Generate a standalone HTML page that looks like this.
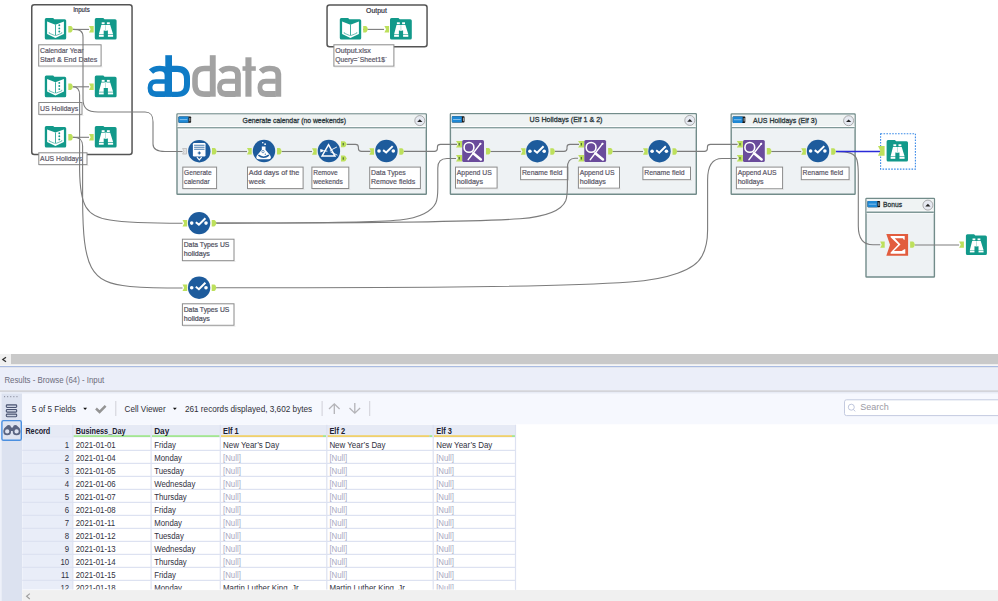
<!DOCTYPE html>
<html><head><meta charset="utf-8"><style>
html,body{margin:0;padding:0;background:#fff;overflow:hidden}
svg{display:block}
text{font-family:"Liberation Sans",sans-serif;white-space:pre}
</style></head><body>
<svg width="998" height="601" viewBox="0 0 998 601">
<rect x="0" y="0" width="998" height="354" fill="#ffffff"/>
<path d="M148.9,69.6 Q152.6,65.8 159.6,65.8 Q171.29999999999998,65.8 171.29999999999998,73.8 V96.7 H164.6 V75.5 Q164.6,71.3 160.1,71.3 H159.1 Q155.1,71.3 153.1,73.8 Z" fill="#0f7bc6"/>
<path fill-rule="evenodd" d="M165.1,79.3 H156.1 Q147.6,79.3 147.6,88.1 Q147.6,96.9 156.1,96.9 H165.1 Z M165.1,83.7 H156.1 Q152.4,83.7 152.4,87.5 Q152.4,91.3 156.1,91.3 H165.1 Z" fill="#0f7bc6"/>
<rect x="165.3" y="55.2" width="6.7" height="41.5" fill="#0f7bc6"/>
<path fill-rule="evenodd" d="M171.5,65.7 H177 Q190,65.7 190,78.5 V84.2 Q190,96.9 177,96.9 H171.5 Z M171.9,72 H177.5 Q184,72 184,79 V84.7 Q184,91.7 177.5,91.7 H171.9 Z" fill="#0f7bc6"/>
<rect x="209.8" y="55.2" width="5.9" height="41.5" fill="#a2a2a2"/>
<path fill-rule="evenodd" d="M210.2,65.8 H205 Q192.2,65.8 192.2,78.5 V84.2 Q192.2,96.9 205,96.9 H210.2 Z M210.2,71.2 H204 Q197.8,71.2 197.8,78 V84.5 Q197.8,91.2 204,91.2 H210.2 Z" fill="#a2a2a2"/>
<path d="M218.4,69.6 Q222.1,65.8 229.1,65.8 Q240.79999999999998,65.8 240.79999999999998,73.8 V96.7 H234.99999999999997 V75.5 Q234.99999999999997,71.3 230.49999999999997,71.3 H228.6 Q224.6,71.3 222.6,73.8 Z" fill="#a2a2a2"/>
<path fill-rule="evenodd" d="M235.49999999999997,78.8 H225.6 Q217.1,78.8 217.1,87.85 Q217.1,96.9 225.6,96.9 H235.49999999999997 Z M235.49999999999997,83.7 H225.6 Q221.9,83.7 221.9,87.30000000000001 Q221.9,90.9 225.6,90.9 H235.49999999999997 Z" fill="#a2a2a2"/>
<path d="M258.8,69.6 Q262.5,65.8 269.5,65.8 Q281.2,65.8 281.2,73.8 V96.7 H275.4 V75.5 Q275.4,71.3 270.9,71.3 H269.0 Q265.0,71.3 263.0,73.8 Z" fill="#a2a2a2"/>
<path fill-rule="evenodd" d="M275.9,78.8 H266.0 Q257.5,78.8 257.5,87.85 Q257.5,96.9 266.0,96.9 H275.9 Z M275.9,83.7 H266.0 Q262.3,83.7 262.3,87.30000000000001 Q262.3,90.9 266.0,90.9 H275.9 Z" fill="#a2a2a2"/>
<rect x="245.4" y="57.3" width="6.1" height="39.4" fill="#a2a2a2"/>
<rect x="242.5" y="66.25" width="13.3" height="4.55" fill="#a2a2a2"/>
<rect x="31.75" y="4.75" width="100.30000000000001" height="149.7" rx="2.5" fill="#fff" stroke="#555" stroke-width="1.5"/>
<text x="73.20" y="12.30" font-size="7.2" font-weight="normal" fill="#303040" text-anchor="start" textLength="16.50" lengthAdjust="spacingAndGlyphs" stroke="#303040" stroke-width="0.2">Inputs</text>
<rect x="327.05" y="4.95" width="100.0" height="41.699999999999996" rx="2.5" fill="#fff" stroke="#555" stroke-width="1.5"/>
<text x="366.10" y="12.50" font-size="7.2" font-weight="normal" fill="#303040" text-anchor="start" textLength="20.80" lengthAdjust="spacingAndGlyphs" stroke="#303040" stroke-width="0.2">Output</text>
<rect x="177.0" y="113.9" width="249.29999999999998" height="80.39999999999999" rx="0.6" fill="#eef2f4" stroke="#728c8a" stroke-width="1.4"/>
<rect x="177.70000000000002" y="114.60000000000001" width="247.89999999999998" height="12.399999999999997" fill="#eff3f3"/>
<rect x="177.70000000000002" y="126.1" width="247.89999999999998" height="1" fill="#ffffff"/>
<rect x="177.70000000000002" y="127.1" width="247.89999999999998" height="1.5" fill="#7f9897"/>
<rect x="177.70000000000002" y="128.6" width="247.89999999999998" height="0.8" fill="#fafcfc"/>
<rect x="178.5" y="116.5" width="12.6" height="6.3" rx="0.8" fill="#111"/>
<rect x="178.5" y="116.5" width="10" height="6.3" rx="0.8" fill="#1e88d4"/>
<rect x="179.70000000000002" y="119.2" width="7.6" height="0.9" fill="#8fc6ee"/>
<rect x="189.5" y="117.8" width="0.8" height="3.6" fill="#ddd"/>
<circle cx="419.8" cy="120.60000000000001" r="5.0" fill="#e6e9f1" stroke="#9a9a9a" stroke-width="0.8"/>
<path d="M417.2,121.9 L419.8,119.30000000000001 L422.40000000000003,121.9 Z" fill="#222"/>
<text x="242.60" y="122.60" font-size="7.9" font-weight="normal" fill="#2e3a40" text-anchor="start" textLength="103.40" lengthAdjust="spacingAndGlyphs" stroke="#2e3a40" stroke-width="0.32">Generate calendar (no weekends)</text>
<rect x="450.4" y="113.7" width="245.9" height="80.6" rx="0.6" fill="#eef2f4" stroke="#728c8a" stroke-width="1.4"/>
<rect x="451.09999999999997" y="114.4" width="244.5" height="12.6" fill="#eff3f3"/>
<rect x="451.09999999999997" y="126.1" width="244.5" height="1" fill="#ffffff"/>
<rect x="451.09999999999997" y="127.1" width="244.5" height="1.5" fill="#7f9897"/>
<rect x="451.09999999999997" y="128.6" width="244.5" height="0.8" fill="#fafcfc"/>
<rect x="451.9" y="116.3" width="12.6" height="6.3" rx="0.8" fill="#111"/>
<rect x="451.9" y="116.3" width="10" height="6.3" rx="0.8" fill="#1e88d4"/>
<rect x="453.09999999999997" y="119.0" width="7.6" height="0.9" fill="#8fc6ee"/>
<rect x="462.9" y="117.6" width="0.8" height="3.6" fill="#ddd"/>
<circle cx="689.8" cy="120.4" r="5.0" fill="#e6e9f1" stroke="#9a9a9a" stroke-width="0.8"/>
<path d="M687.1999999999999,121.7 L689.8,119.10000000000001 L692.4,121.7 Z" fill="#222"/>
<text x="529.50" y="122.40" font-size="7.9" font-weight="normal" fill="#2e3a40" text-anchor="start" textLength="73.00" lengthAdjust="spacingAndGlyphs" stroke="#2e3a40" stroke-width="0.32">US Holidays (Elf 1 &amp; 2)</text>
<rect x="731.2" y="114.0" width="123.89999999999995" height="80.3" rx="0.6" fill="#eef2f4" stroke="#728c8a" stroke-width="1.4"/>
<rect x="731.9" y="114.7" width="122.49999999999996" height="12.200000000000008" fill="#eff3f3"/>
<rect x="731.9" y="126.0" width="122.49999999999996" height="1" fill="#ffffff"/>
<rect x="731.9" y="127.0" width="122.49999999999996" height="1.5" fill="#7f9897"/>
<rect x="731.9" y="128.5" width="122.49999999999996" height="0.8" fill="#fafcfc"/>
<rect x="732.7" y="116.6" width="12.6" height="6.3" rx="0.8" fill="#111"/>
<rect x="732.7" y="116.6" width="10" height="6.3" rx="0.8" fill="#1e88d4"/>
<rect x="733.9" y="119.3" width="7.6" height="0.9" fill="#8fc6ee"/>
<rect x="743.7" y="117.89999999999999" width="0.8" height="3.6" fill="#ddd"/>
<circle cx="848.5999999999999" cy="120.7" r="5.0" fill="#e6e9f1" stroke="#9a9a9a" stroke-width="0.8"/>
<path d="M845.9999999999999,122.0 L848.5999999999999,119.4 L851.1999999999999,122.0 Z" fill="#222"/>
<text x="753.00" y="122.70" font-size="7.9" font-weight="normal" fill="#2e3a40" text-anchor="start" textLength="64.00" lengthAdjust="spacingAndGlyphs" stroke="#2e3a40" stroke-width="0.32">AUS Holidays (Elf 3)</text>
<rect x="866.0" y="198.39999999999998" width="68.40000000000006" height="78.6" rx="0.6" fill="#eef2f4" stroke="#728c8a" stroke-width="1.4"/>
<rect x="866.6999999999999" y="199.1" width="67.00000000000007" height="12.300000000000017" fill="#eff3f3"/>
<rect x="866.6999999999999" y="210.5" width="67.00000000000007" height="1" fill="#ffffff"/>
<rect x="866.6999999999999" y="211.5" width="67.00000000000007" height="1.5" fill="#7f9897"/>
<rect x="866.6999999999999" y="213.0" width="67.00000000000007" height="0.8" fill="#fafcfc"/>
<rect x="867.5" y="201.0" width="12.6" height="6.3" rx="0.8" fill="#111"/>
<rect x="867.5" y="201.0" width="10" height="6.3" rx="0.8" fill="#1e88d4"/>
<rect x="868.6999999999999" y="203.7" width="7.6" height="0.9" fill="#8fc6ee"/>
<rect x="878.5" y="202.29999999999998" width="0.8" height="3.6" fill="#ddd"/>
<circle cx="927.9" cy="205.1" r="5.0" fill="#e6e9f1" stroke="#9a9a9a" stroke-width="0.8"/>
<path d="M925.3,206.4 L927.9,203.79999999999998 L930.5,206.4 Z" fill="#222"/>
<text x="883.00" y="207.10" font-size="7.9" font-weight="normal" fill="#2e3a40" text-anchor="start" textLength="19.00" lengthAdjust="spacingAndGlyphs" stroke="#2e3a40" stroke-width="0.32">Bonus</text>
<rect x="38.7" y="44.8" width="62.39999999999999" height="21.300000000000004" fill="#fff" stroke="#8a8a8a" stroke-width="1"/>
<rect x="39.2" y="66.6" width="63.39999999999999" height="0.7" fill="#e0e0e0"/>
<text x="40.00" y="53.00" font-size="7.8" font-weight="normal" fill="#5c5868" text-anchor="start" textLength="43.50" lengthAdjust="spacingAndGlyphs" stroke="#5c5868" stroke-width="0.22">Calendar Year</text>
<text x="40.00" y="61.50" font-size="7.8" font-weight="normal" fill="#5c5868" text-anchor="start" textLength="57.20" lengthAdjust="spacingAndGlyphs" stroke="#5c5868" stroke-width="0.22">Start &amp; End Dates</text>
<rect x="38.8" y="102.5" width="43.2" height="11.899999999999997" fill="#fff" stroke="#8a8a8a" stroke-width="1"/>
<rect x="39.3" y="114.89999999999999" width="44.2" height="0.7" fill="#e0e0e0"/>
<text x="40.10" y="110.70" font-size="7.8" font-weight="normal" fill="#5c5868" text-anchor="start" textLength="38.00" lengthAdjust="spacingAndGlyphs" stroke="#5c5868" stroke-width="0.22">US Holidays</text>
<rect x="38.8" y="152.8" width="48.2" height="11.799999999999988" fill="#fff" stroke="#8a8a8a" stroke-width="1"/>
<rect x="39.3" y="165.1" width="49.2" height="0.7" fill="#e0e0e0"/>
<text x="40.10" y="161.00" font-size="7.8" font-weight="normal" fill="#5c5868" text-anchor="start" textLength="42.00" lengthAdjust="spacingAndGlyphs" stroke="#5c5868" stroke-width="0.22">AUS Holidays</text>
<rect x="333.9" y="44.8" width="60.0" height="21.4" fill="#fff" stroke="#8a8a8a" stroke-width="1"/>
<rect x="334.4" y="66.69999999999999" width="61.0" height="0.7" fill="#e0e0e0"/>
<text x="335.20" y="53.00" font-size="7.8" font-weight="normal" fill="#5c5868" text-anchor="start" textLength="35.70" lengthAdjust="spacingAndGlyphs" stroke="#5c5868" stroke-width="0.22">Output.xlsx</text>
<text x="335.20" y="61.50" font-size="7.8" font-weight="normal" fill="#5c5868" text-anchor="start" textLength="52.00" lengthAdjust="spacingAndGlyphs" stroke="#5c5868" stroke-width="0.22">Query=`Sheet1$`</text>
<rect x="182.4" y="239.2" width="51.599999999999994" height="21.49999999999998" fill="#fff" stroke="#8a8a8a" stroke-width="1"/>
<rect x="182.9" y="261.2" width="52.599999999999994" height="0.7" fill="#e0e0e0"/>
<text x="183.70" y="247.40" font-size="7.8" font-weight="normal" fill="#505060" text-anchor="start" textLength="45.70" lengthAdjust="spacingAndGlyphs" stroke="#505060" stroke-width="0.22">Data Types US</text>
<text x="183.70" y="255.90" font-size="7.8" font-weight="normal" fill="#505060" text-anchor="start" textLength="26.20" lengthAdjust="spacingAndGlyphs" stroke="#505060" stroke-width="0.22">holidays</text>
<rect x="182.4" y="303.8" width="51.599999999999994" height="21.49999999999998" fill="#fff" stroke="#8a8a8a" stroke-width="1"/>
<rect x="182.9" y="325.8" width="52.599999999999994" height="0.7" fill="#e0e0e0"/>
<text x="183.70" y="312.00" font-size="7.8" font-weight="normal" fill="#505060" text-anchor="start" textLength="45.70" lengthAdjust="spacingAndGlyphs" stroke="#505060" stroke-width="0.22">Data Types US</text>
<text x="183.70" y="320.50" font-size="7.8" font-weight="normal" fill="#505060" text-anchor="start" textLength="26.20" lengthAdjust="spacingAndGlyphs" stroke="#505060" stroke-width="0.22">holidays</text>
<rect x="182.8" y="167.1" width="33.79999999999998" height="21.500000000000007" fill="#fff" stroke="#8a8a8a" stroke-width="1"/>
<rect x="183.3" y="189.1" width="34.79999999999998" height="0.7" fill="#e0e0e0"/>
<text x="184.10" y="175.30" font-size="7.8" font-weight="normal" fill="#5c5868" text-anchor="start" textLength="27.50" lengthAdjust="spacingAndGlyphs" stroke="#5c5868" stroke-width="0.22">Generate</text>
<text x="184.10" y="183.80" font-size="7.8" font-weight="normal" fill="#5c5868" text-anchor="start" textLength="25.60" lengthAdjust="spacingAndGlyphs" stroke="#5c5868" stroke-width="0.22">calendar</text>
<rect x="247.5" y="167.1" width="55.60000000000002" height="21.500000000000007" fill="#fff" stroke="#8a8a8a" stroke-width="1"/>
<rect x="248.0" y="189.1" width="56.60000000000002" height="0.7" fill="#e0e0e0"/>
<text x="248.80" y="175.30" font-size="7.8" font-weight="normal" fill="#5c5868" text-anchor="start" textLength="50.60" lengthAdjust="spacingAndGlyphs" stroke="#5c5868" stroke-width="0.22">Add days of the</text>
<text x="248.80" y="183.80" font-size="7.8" font-weight="normal" fill="#5c5868" text-anchor="start" textLength="16.60" lengthAdjust="spacingAndGlyphs" stroke="#5c5868" stroke-width="0.22">week</text>
<rect x="311.9" y="167.1" width="36.900000000000034" height="21.400000000000013" fill="#fff" stroke="#8a8a8a" stroke-width="1"/>
<rect x="312.4" y="189.0" width="37.900000000000034" height="0.7" fill="#e0e0e0"/>
<text x="313.20" y="175.30" font-size="7.8" font-weight="normal" fill="#5c5868" text-anchor="start" textLength="24.50" lengthAdjust="spacingAndGlyphs" stroke="#5c5868" stroke-width="0.22">Remove</text>
<text x="313.20" y="183.80" font-size="7.8" font-weight="normal" fill="#5c5868" text-anchor="start" textLength="29.60" lengthAdjust="spacingAndGlyphs" stroke="#5c5868" stroke-width="0.22">weekends</text>
<rect x="369.7" y="167.1" width="50.69999999999999" height="21.400000000000013" fill="#fff" stroke="#8a8a8a" stroke-width="1"/>
<rect x="370.2" y="189.0" width="51.69999999999999" height="0.7" fill="#e0e0e0"/>
<text x="371.00" y="175.30" font-size="7.8" font-weight="normal" fill="#5c5868" text-anchor="start" textLength="34.70" lengthAdjust="spacingAndGlyphs" stroke="#5c5868" stroke-width="0.22">Data Types</text>
<text x="371.00" y="183.80" font-size="7.8" font-weight="normal" fill="#5c5868" text-anchor="start" textLength="44.20" lengthAdjust="spacingAndGlyphs" stroke="#5c5868" stroke-width="0.22">Remove fields</text>
<rect x="455.5" y="167.1" width="41.60000000000002" height="21.1" fill="#fff" stroke="#8a8a8a" stroke-width="1"/>
<rect x="456.0" y="188.7" width="42.60000000000002" height="0.7" fill="#e0e0e0"/>
<text x="456.80" y="175.30" font-size="7.8" font-weight="normal" fill="#5c5868" text-anchor="start" textLength="34.90" lengthAdjust="spacingAndGlyphs" stroke="#5c5868" stroke-width="0.22">Append US</text>
<text x="456.80" y="183.80" font-size="7.8" font-weight="normal" fill="#5c5868" text-anchor="start" textLength="26.20" lengthAdjust="spacingAndGlyphs" stroke="#5c5868" stroke-width="0.22">holidays</text>
<rect x="520.6" y="167.1" width="47.299999999999955" height="12.6" fill="#fff" stroke="#8a8a8a" stroke-width="1"/>
<rect x="521.1" y="180.2" width="48.299999999999955" height="0.7" fill="#e0e0e0"/>
<text x="521.90" y="175.30" font-size="7.8" font-weight="normal" fill="#5c5868" text-anchor="start" textLength="40.40" lengthAdjust="spacingAndGlyphs" stroke="#5c5868" stroke-width="0.22">Rename field</text>
<rect x="578.4" y="167.1" width="41.10000000000002" height="21.1" fill="#fff" stroke="#8a8a8a" stroke-width="1"/>
<rect x="578.9" y="188.7" width="42.10000000000002" height="0.7" fill="#e0e0e0"/>
<text x="579.70" y="175.30" font-size="7.8" font-weight="normal" fill="#5c5868" text-anchor="start" textLength="34.90" lengthAdjust="spacingAndGlyphs" stroke="#5c5868" stroke-width="0.22">Append US</text>
<text x="579.70" y="183.80" font-size="7.8" font-weight="normal" fill="#5c5868" text-anchor="start" textLength="26.20" lengthAdjust="spacingAndGlyphs" stroke="#5c5868" stroke-width="0.22">holidays</text>
<rect x="642.9" y="167.1" width="47.60000000000002" height="12.6" fill="#fff" stroke="#8a8a8a" stroke-width="1"/>
<rect x="643.4" y="180.2" width="48.60000000000002" height="0.7" fill="#e0e0e0"/>
<text x="644.20" y="175.30" font-size="7.8" font-weight="normal" fill="#5c5868" text-anchor="start" textLength="40.40" lengthAdjust="spacingAndGlyphs" stroke="#5c5868" stroke-width="0.22">Rename field</text>
<rect x="736.4" y="167.1" width="46.200000000000045" height="21.699999999999996" fill="#fff" stroke="#8a8a8a" stroke-width="1"/>
<rect x="736.9" y="189.29999999999998" width="47.200000000000045" height="0.7" fill="#e0e0e0"/>
<text x="737.70" y="175.30" font-size="7.8" font-weight="normal" fill="#5c5868" text-anchor="start" textLength="38.90" lengthAdjust="spacingAndGlyphs" stroke="#5c5868" stroke-width="0.22">Append AUS</text>
<text x="737.70" y="183.80" font-size="7.8" font-weight="normal" fill="#5c5868" text-anchor="start" textLength="25.90" lengthAdjust="spacingAndGlyphs" stroke="#5c5868" stroke-width="0.22">holidays</text>
<rect x="801.3" y="167.1" width="47.80000000000007" height="12.6" fill="#fff" stroke="#8a8a8a" stroke-width="1"/>
<rect x="801.8" y="180.2" width="48.80000000000007" height="0.7" fill="#e0e0e0"/>
<text x="802.60" y="175.30" font-size="7.8" font-weight="normal" fill="#5c5868" text-anchor="start" textLength="40.40" lengthAdjust="spacingAndGlyphs" stroke="#5c5868" stroke-width="0.22">Rename field</text>
<path d="M73,29.4 H89" fill="none" stroke="#7c7c7c" stroke-width="1.1"/>
<path d="M73,29.4 C80,29.4 83,31 83,37 L83,99 C83,108 87,112 98,112 L145,112 C151,112 153,115 153,122 L153,144 C153,149 157,151.5 165,151.5 L182.5,151.5" fill="none" stroke="#7c7c7c" stroke-width="1.1"/>
<path d="M73,86.8 H89" fill="none" stroke="#7c7c7c" stroke-width="1.1"/>
<path d="M73,86.8 C77,86.8 79.6,89 79.6,95 L79.6,170 C80,205 86,217 110,220 C125,222.5 150,223.2 182.5,223.2" fill="none" stroke="#7c7c7c" stroke-width="1.1"/>
<path d="M73,137.3 H89" fill="none" stroke="#7c7c7c" stroke-width="1.1"/>
<path d="M73,137.3 C79,137.3 82.6,139 82.6,146 L82.6,200 C83,268 90,283 130,286.5 C150,288 165,288 182.5,288" fill="none" stroke="#7c7c7c" stroke-width="1.1"/>
<path d="M363,29.4 H384" fill="none" stroke="#7c7c7c" stroke-width="1.1"/>
<path d="M216.7,151.5 H247" fill="none" stroke="#7c7c7c" stroke-width="1.1"/>
<path d="M281.8,151.5 H312" fill="none" stroke="#7c7c7c" stroke-width="1.1"/>
<path d="M346.7,144.4 H355.5 C357.8,144.4 358.4,145.2 358.4,147.2 V148.6 C358.4,150.6 359.3,151.4 361.5,151.4 H370.5" fill="none" stroke="#7c7c7c" stroke-width="1.1"/>
<path d="M404,151.4 H434.5 C436.8,151.4 437.4,150.5 437.4,148.5 V147 C437.4,145 438.3,144.4 440.5,144.4 H457" fill="none" stroke="#7c7c7c" stroke-width="1.1"/>
<path d="M216,223.1 C300,223.1 370,222.5 400,220 C420,218 432,211 435.8,203 C437.6,199 437.8,193 437.8,188 L437.8,168 C437.8,162 440.5,158.5 447,158.5 H456" fill="none" stroke="#7c7c7c" stroke-width="1.1"/>
<path d="M216,223.1 C360,223.1 470,222 520,218.8 C548,216.5 562,210 565.8,200.5 C567.4,196 567.4,190 567.4,185 L567.4,168 C567.4,162 569.5,158.2 575,158.2 H578" fill="none" stroke="#7c7c7c" stroke-width="1.1"/>
<path d="M216,287.7 C420,287.7 560,287 630,282 C668,279.5 695,270 702,256 C706.5,248 707.6,240 707.6,230 L707.6,180 C707.6,167 711,158.5 722,158.5 H736.7" fill="none" stroke="#7c7c7c" stroke-width="1.1"/>
<path d="M490.3,151.5 H520.8" fill="none" stroke="#7c7c7c" stroke-width="1.1"/>
<path d="M555,151.4 H564 C566.3,151.4 567,150.5 567,148.5 V147 C567,145 568,144.4 570,144.4 H579" fill="none" stroke="#7c7c7c" stroke-width="1.1"/>
<path d="M612.5,151.5 H643" fill="none" stroke="#7c7c7c" stroke-width="1.1"/>
<path d="M677,151.4 H704.5 C706.8,151.4 707.4,150.5 707.4,148.5 V147 C707.4,145 708.3,144.4 710.5,144.4 H737.5" fill="none" stroke="#7c7c7c" stroke-width="1.1"/>
<path d="M770.4,151.5 H801.2" fill="none" stroke="#7c7c7c" stroke-width="1.1"/>
<path d="M836,151.5 C848,151.5 855,153 857,160 C858,164 858.3,168 858.3,175 L858.3,226 C858.3,236 861,244.8 873,244.8 H880.2" fill="none" stroke="#7c7c7c" stroke-width="1.1"/>
<path d="M836,151.6 H880.5" fill="none" stroke="#2b2bd8" stroke-width="1.5"/>
<path d="M914.9,245 H959.1" fill="none" stroke="#7c7c7c" stroke-width="1.1"/>
<path d="M46.3,18.0 H53.145999999999994 L54.346,19.2 H64.69999999999999 Q66.19999999999999,19.2 66.19999999999999,20.7 V38.1 Q66.19999999999999,39.6 64.69999999999999,39.6 H46.3 Q44.8,39.6 44.8,38.1 V19.5 Q44.8,18.0 46.3,18.0 Z" fill="#12998a"/>
<path d="M47.099999999999994,21.5 L55.4,24.7 L63.89999999999999,21.5 V34.0 L55.4,38.0 L47.099999999999994,34.0 Z" fill="#fff"/>
<rect x="55.0" y="24.7" width="0.8" height="11.0" fill="#12998a"/>
<path d="M49.199999999999996,32.2 V33.2 L54.8,35.5 M61.79999999999999,32.2 V33.2 L56.0,35.5" fill="none" stroke="#12998a" stroke-width="0.6"/>
<circle cx="59.3" cy="25.3" r="0.95" fill="#12998a"/>
<circle cx="59.3" cy="28.400000000000002" r="0.95" fill="#12998a"/>
<circle cx="59.3" cy="31.5" r="0.95" fill="#12998a"/>
<path d="M68.3,25.9 h2.4440000000000004 q0.9400000000000001,0 1.5510000000000002,1.3 L73.0,29.15 L72.295,31.099999999999998 q-0.6110000000000001,1.3 -1.5510000000000002,1.3 H68.3 Z" fill="#bde05c"/>
<path d="M89,25.9 H93.7 V32.4 H89 L90.645,29.15 Z" fill="#bde05c"/>
<path d="M96.3,18.0 H103.30199999999999 L104.502,19.2 H115.1 Q116.6,19.2 116.6,20.7 V38.1 Q116.6,39.6 115.1,39.6 H96.3 Q94.8,39.6 94.8,38.1 V19.5 Q94.8,18.0 96.3,18.0 Z" fill="#12998a"/>
<rect x="101.70" y="22.30" width="2.90" height="1.90" fill="#fff"/>
<rect x="106.90" y="22.30" width="2.90" height="1.90" fill="#fff"/>
<path d="M101.30,24.90 L106.90,24.90 L106.90,30.50 L103.70,30.50 L103.70,34.20 L98.90,34.20 Z" fill="#fff"/>
<path d="M104.60,24.90 L110.20,24.90 L113.10,34.20 L107.90,34.20 L107.90,30.50 L104.60,30.50 Z" fill="#fff"/>
<rect x="98.90" y="34.80" width="4.80" height="2.00" fill="#fff"/>
<rect x="107.90" y="34.80" width="5.20" height="2.00" fill="#fff"/>
<rect x="105.50" y="25.20" width="0.50" height="5.00" fill="#12998a" opacity="0.6"/>
<path d="M46.3,75.6 H53.145999999999994 L54.346,76.8 H64.69999999999999 Q66.19999999999999,76.8 66.19999999999999,78.3 V95.69999999999999 Q66.19999999999999,97.19999999999999 64.69999999999999,97.19999999999999 H46.3 Q44.8,97.19999999999999 44.8,95.69999999999999 V77.1 Q44.8,75.6 46.3,75.6 Z" fill="#12998a"/>
<path d="M47.099999999999994,79.1 L55.4,82.3 L63.89999999999999,79.1 V91.6 L55.4,95.6 L47.099999999999994,91.6 Z" fill="#fff"/>
<rect x="55.0" y="82.3" width="0.8" height="11.0" fill="#12998a"/>
<path d="M49.199999999999996,89.8 V90.8 L54.8,93.1 M61.79999999999999,89.8 V90.8 L56.0,93.1" fill="none" stroke="#12998a" stroke-width="0.6"/>
<circle cx="59.3" cy="82.89999999999999" r="0.95" fill="#12998a"/>
<circle cx="59.3" cy="85.99999999999999" r="0.95" fill="#12998a"/>
<circle cx="59.3" cy="89.1" r="0.95" fill="#12998a"/>
<path d="M68.3,83.4 h2.4440000000000004 q0.9400000000000001,0 1.5510000000000002,1.3 L73.0,86.65 L72.295,88.60000000000001 q-0.6110000000000001,1.3 -1.5510000000000002,1.3 H68.3 Z" fill="#bde05c"/>
<path d="M89,83.4 H93.7 V89.9 H89 L90.645,86.65 Z" fill="#bde05c"/>
<path d="M96.3,75.6 H103.30199999999999 L104.502,76.8 H115.1 Q116.6,76.8 116.6,78.3 V95.69999999999999 Q116.6,97.19999999999999 115.1,97.19999999999999 H96.3 Q94.8,97.19999999999999 94.8,95.69999999999999 V77.1 Q94.8,75.6 96.3,75.6 Z" fill="#12998a"/>
<rect x="101.70" y="79.90" width="2.90" height="1.90" fill="#fff"/>
<rect x="106.90" y="79.90" width="2.90" height="1.90" fill="#fff"/>
<path d="M101.30,82.50 L106.90,82.50 L106.90,88.10 L103.70,88.10 L103.70,91.80 L98.90,91.80 Z" fill="#fff"/>
<path d="M104.60,82.50 L110.20,82.50 L113.10,91.80 L107.90,91.80 L107.90,88.10 L104.60,88.10 Z" fill="#fff"/>
<rect x="98.90" y="92.40" width="4.80" height="2.00" fill="#fff"/>
<rect x="107.90" y="92.40" width="5.20" height="2.00" fill="#fff"/>
<rect x="105.50" y="82.80" width="0.50" height="5.00" fill="#12998a" opacity="0.6"/>
<path d="M46.3,125.9 H53.145999999999994 L54.346,127.10000000000001 H64.69999999999999 Q66.19999999999999,127.10000000000001 66.19999999999999,128.6 V146.0 Q66.19999999999999,147.5 64.69999999999999,147.5 H46.3 Q44.8,147.5 44.8,146.0 V127.4 Q44.8,125.9 46.3,125.9 Z" fill="#12998a"/>
<path d="M47.099999999999994,129.4 L55.4,132.6 L63.89999999999999,129.4 V141.9 L55.4,145.9 L47.099999999999994,141.9 Z" fill="#fff"/>
<rect x="55.0" y="132.6" width="0.8" height="11.0" fill="#12998a"/>
<path d="M49.199999999999996,140.1 V141.1 L54.8,143.4 M61.79999999999999,140.1 V141.1 L56.0,143.4" fill="none" stroke="#12998a" stroke-width="0.6"/>
<circle cx="59.3" cy="133.20000000000002" r="0.95" fill="#12998a"/>
<circle cx="59.3" cy="136.3" r="0.95" fill="#12998a"/>
<circle cx="59.3" cy="139.4" r="0.95" fill="#12998a"/>
<path d="M68.3,134.0 h2.4440000000000004 q0.9400000000000001,0 1.5510000000000002,1.3 L73.0,137.25 L72.295,139.2 q-0.6110000000000001,1.3 -1.5510000000000002,1.3 H68.3 Z" fill="#bde05c"/>
<path d="M89,134.0 H93.7 V140.5 H89 L90.645,137.25 Z" fill="#bde05c"/>
<path d="M96.3,125.9 H103.30199999999999 L104.502,127.10000000000001 H115.1 Q116.6,127.10000000000001 116.6,128.6 V146.0 Q116.6,147.5 115.1,147.5 H96.3 Q94.8,147.5 94.8,146.0 V127.4 Q94.8,125.9 96.3,125.9 Z" fill="#12998a"/>
<rect x="101.70" y="130.20" width="2.90" height="1.90" fill="#fff"/>
<rect x="106.90" y="130.20" width="2.90" height="1.90" fill="#fff"/>
<path d="M101.30,132.80 L106.90,132.80 L106.90,138.40 L103.70,138.40 L103.70,142.10 L98.90,142.10 Z" fill="#fff"/>
<path d="M104.60,132.80 L110.20,132.80 L113.10,142.10 L107.90,142.10 L107.90,138.40 L104.60,138.40 Z" fill="#fff"/>
<rect x="98.90" y="142.70" width="4.80" height="2.00" fill="#fff"/>
<rect x="107.90" y="142.70" width="5.20" height="2.00" fill="#fff"/>
<rect x="105.50" y="133.10" width="0.50" height="5.00" fill="#12998a" opacity="0.6"/>
<path d="M341.3,18.0 H348.146 L349.346,19.2 H359.7 Q361.2,19.2 361.2,20.7 V38.1 Q361.2,39.6 359.7,39.6 H341.3 Q339.8,39.6 339.8,38.1 V19.5 Q339.8,18.0 341.3,18.0 Z" fill="#12998a"/>
<path d="M342.1,21.5 L350.40000000000003,24.7 L358.9,21.5 V34.0 L350.40000000000003,38.0 L342.1,34.0 Z" fill="#fff"/>
<rect x="350.00000000000006" y="24.7" width="0.8" height="11.0" fill="#12998a"/>
<path d="M344.2,32.2 V33.2 L349.8,35.5 M356.8,32.2 V33.2 L351.00000000000006,35.5" fill="none" stroke="#12998a" stroke-width="0.6"/>
<path d="M363.2,25.9 h2.4440000000000004 q0.9400000000000001,0 1.5510000000000002,1.3 L367.9,29.15 L367.195,31.099999999999998 q-0.6110000000000001,1.3 -1.5510000000000002,1.3 H363.2 Z" fill="#bde05c"/>
<path d="M384.4,25.9 H389.09999999999997 V32.4 H384.4 L386.04499999999996,29.15 Z" fill="#bde05c"/>
<path d="M391.5,18.0 H398.502 L399.702,19.2 H410.3 Q411.8,19.2 411.8,20.7 V38.1 Q411.8,39.6 410.3,39.6 H391.5 Q390.0,39.6 390.0,38.1 V19.5 Q390.0,18.0 391.5,18.0 Z" fill="#12998a"/>
<rect x="396.90" y="22.30" width="2.90" height="1.90" fill="#fff"/>
<rect x="402.10" y="22.30" width="2.90" height="1.90" fill="#fff"/>
<path d="M396.50,24.90 L402.10,24.90 L402.10,30.50 L398.90,30.50 L398.90,34.20 L394.10,34.20 Z" fill="#fff"/>
<path d="M399.80,24.90 L405.40,24.90 L408.30,34.20 L403.10,34.20 L403.10,30.50 L399.80,30.50 Z" fill="#fff"/>
<rect x="394.10" y="34.80" width="4.80" height="2.00" fill="#fff"/>
<rect x="403.10" y="34.80" width="5.20" height="2.00" fill="#fff"/>
<rect x="400.70" y="25.20" width="0.50" height="5.00" fill="#12998a" opacity="0.6"/>
<path d="M182.2,148.1 H186.89999999999998 V154.6 H182.2 L183.845,151.35 Z" fill="#e2e2e2"/>
<path d="M182.6,148.5 H186.5 V154 H182.6 L184,151.3 Z" fill="none" stroke="#b0b0b0" stroke-width="0.6"/>
<circle cx="199.3" cy="151.2" r="11.2" fill="#1d5b9c"/>
<rect x="192.9" y="143.1" width="12.6" height="13.4" rx="1.2" fill="#fff"/>
<rect x="194.10000000000002" y="144.79999999999998" width="10.4" height="0.8" fill="#1d5b9c"/>
<rect x="194.10000000000002" y="146.79999999999998" width="10.4" height="0.8" fill="#1d5b9c"/>
<rect x="194.10000000000002" y="148.79999999999998" width="10.4" height="0.8" fill="#1d5b9c"/>
<path d="M197.70000000000002,153.0 h3.2 M199.3,151.39999999999998 v3.2" stroke="#1d5b9c" stroke-width="1.1"/>
<path d="M196.9,157.2 L199.3,159.79999999999998 L201.70000000000002,157.2" fill="none" stroke="#fff" stroke-width="1.2"/>
<path d="M212.0,148.1 h2.4440000000000004 q0.9400000000000001,0 1.5510000000000002,1.3 L216.7,151.35 L215.995,153.29999999999998 q-0.6110000000000001,1.3 -1.5510000000000002,1.3 H212.0 Z" fill="#bde05c"/>
<path d="M247.0,148.1 H251.7 V154.6 H247.0 L248.645,151.35 Z" fill="#bde05c"/>
<circle cx="264.0" cy="151.0" r="11.2" fill="#1d5b9c"/>
<path d="M261.8,146.4 H265.5 V149.7 L270.3,155.6 Q272.2,159.3 268.4,159.3 H258.8 Q255.0,159.3 256.9,155.6 L261.8,149.7 Z" fill="#fff"/>
<path d="M258.4,155.2 Q263.6,159.2 268.9,155.2" fill="none" stroke="#1d5b9c" stroke-width="1.5"/>
<circle cx="263.0" cy="151.6" r="1.2" fill="none" stroke="#1d5b9c" stroke-width="0.6"/><circle cx="265.3" cy="154.2" r="0.6" fill="#1d5b9c"/>
<rect x="262.1" y="142.0" width="1.3" height="1.3" fill="#fff"/><rect x="264.3" y="143.4" width="1.6" height="1.6" fill="#fff"/>
<path d="M277.0,148.1 h2.4440000000000004 q0.9400000000000001,0 1.5510000000000002,1.3 L281.7,151.35 L280.995,153.29999999999998 q-0.6110000000000001,1.3 -1.5510000000000002,1.3 H277.0 Z" fill="#bde05c"/>
<path d="M312.0,148.2 H316.7 V154.7 H312.0 L313.645,151.45 Z" fill="#bde05c"/>
<circle cx="328.9" cy="151.0" r="11.2" fill="#1d5b9c"/>
<path d="M328.5,144.7 L334.9,156.0 H322.09999999999997 Z" fill="none" stroke="#fff" stroke-width="1.5" stroke-linejoin="miter"/>
<path d="M320.7,150.4 L327.4,151.2 M329.9,150.6 L336.9,147.0 M330.4,151.8 L337.4,155.2" stroke="#fff" stroke-width="0.9"/>
<path d="M320.29999999999995,149.0 V152.6 L322.9,151.6 V149.8 Z" fill="#fff"/>
<path d="M341.0,141.2 h2.9640000000000004 q1.1400000000000001,0 1.8810000000000002,1.2000000000000002 L346.7,144.2 L345.845,146.0 q-0.7410000000000001,1.2000000000000002 -1.8810000000000002,1.2000000000000002 H341.0 Z" fill="#bde05c"/>
<rect x="342.71" y="143.0" width="1" height="2.4000000000000004" fill="#3a5a30"/>
<path d="M341.0,155.5 h2.9640000000000004 q1.1400000000000001,0 1.8810000000000002,1.2000000000000002 L346.7,158.5 L345.845,160.3 q-0.7410000000000001,1.2000000000000002 -1.8810000000000002,1.2000000000000002 H341.0 Z" fill="#bde05c"/>
<rect x="342.71" y="157.3" width="1" height="2.4000000000000004" fill="#3a5a30"/>
<path d="M369.3,148.2 H374.0 V154.7 H369.3 L370.945,151.45 Z" fill="#bde05c"/>
<circle cx="386.4" cy="151.0" r="11.2" fill="#1d5b9c"/>
<circle cx="379.0" cy="151.0" r="1.8" fill="#fff"/><circle cx="393.29999999999995" cy="151.0" r="1.8" fill="#fff"/>
<path d="M383.09999999999997,150.1 L386.2,152.5 L392.7,146.1" fill="none" stroke="#fff" stroke-width="2"/>
<path d="M399.3,148.2 h2.4440000000000004 q0.9400000000000001,0 1.5510000000000002,1.3 L404.0,151.45 L403.295,153.39999999999998 q-0.6110000000000001,1.3 -1.5510000000000002,1.3 H399.3 Z" fill="#bde05c"/>
<path d="M456.0,141.0 H462.0 V147.5 H456.0 L458.1,144.25 Z" fill="#bde05c"/>
<rect x="458.7" y="142.95" width="1" height="2.6" fill="#3a5a30"/>
<path d="M456.0,155.0 H462.0 V161.5 H456.0 L458.1,158.25 Z" fill="#bde05c"/>
<rect x="458.7" y="156.95" width="1" height="2.6" fill="#3a5a30"/>
<rect x="462.2" y="140.0" width="21.8" height="22" rx="1.6" fill="#6a4b9b"/>
<circle cx="469.0" cy="147.4" r="4.9" fill="none" stroke="#fff" stroke-width="1.6"/>
<path d="M473.2,153.2 L480.8,159.4" stroke="#fff" stroke-width="2.6" stroke-linecap="round"/>
<path d="M480.5,143.6 L468.2,159.6" stroke="#fff" stroke-width="1.5" stroke-linecap="round"/>
<circle cx="480.4" cy="143.8" r="1.1" fill="#fff"/>
<path d="M486.0,148.0 h2.4440000000000004 q0.9400000000000001,0 1.5510000000000002,1.3 L490.7,151.25 L489.995,153.2 q-0.6110000000000001,1.3 -1.5510000000000002,1.3 H486.0 Z" fill="#bde05c"/>
<path d="M520.8,148.2 H525.5 V154.7 H520.8 L522.4449999999999,151.45 Z" fill="#bde05c"/>
<circle cx="537.3" cy="151.2" r="11.2" fill="#1d5b9c"/>
<circle cx="529.9" cy="151.2" r="1.8" fill="#fff"/><circle cx="544.1999999999999" cy="151.2" r="1.8" fill="#fff"/>
<path d="M534.0,150.29999999999998 L537.0999999999999,152.7 L543.5999999999999,146.29999999999998" fill="none" stroke="#fff" stroke-width="2"/>
<path d="M550.3,148.2 h2.4440000000000004 q0.9400000000000001,0 1.5510000000000002,1.3 L555.0,151.45 L554.295,153.39999999999998 q-0.6110000000000001,1.3 -1.5510000000000002,1.3 H550.3 Z" fill="#bde05c"/>
<path d="M578.0999999999999,141.0 H584.0999999999999 V147.5 H578.0999999999999 L580.1999999999999,144.25 Z" fill="#bde05c"/>
<rect x="580.8" y="142.95" width="1" height="2.6" fill="#3a5a30"/>
<path d="M578.0999999999999,155.0 H584.0999999999999 V161.5 H578.0999999999999 L580.1999999999999,158.25 Z" fill="#bde05c"/>
<rect x="580.8" y="156.95" width="1" height="2.6" fill="#3a5a30"/>
<rect x="584.3" y="140.0" width="21.8" height="22" rx="1.6" fill="#6a4b9b"/>
<circle cx="591.0999999999999" cy="147.4" r="4.9" fill="none" stroke="#fff" stroke-width="1.6"/>
<path d="M595.3,153.2 L602.9,159.4" stroke="#fff" stroke-width="2.6" stroke-linecap="round"/>
<path d="M602.5999999999999,143.6 L590.3,159.6" stroke="#fff" stroke-width="1.5" stroke-linecap="round"/>
<circle cx="602.5" cy="143.8" r="1.1" fill="#fff"/>
<path d="M608.0999999999999,148.0 h2.4440000000000004 q0.9400000000000001,0 1.5510000000000002,1.3 L612.8,151.25 L612.0949999999999,153.2 q-0.6110000000000001,1.3 -1.5510000000000002,1.3 H608.0999999999999 Z" fill="#bde05c"/>
<path d="M643.0,148.2 H647.7 V154.7 H643.0 L644.645,151.45 Z" fill="#bde05c"/>
<circle cx="659.5" cy="151.2" r="11.2" fill="#1d5b9c"/>
<circle cx="652.1" cy="151.2" r="1.8" fill="#fff"/><circle cx="666.4" cy="151.2" r="1.8" fill="#fff"/>
<path d="M656.2,150.29999999999998 L659.3,152.7 L665.8,146.29999999999998" fill="none" stroke="#fff" stroke-width="2"/>
<path d="M672.5,148.2 h2.4440000000000004 q0.9400000000000001,0 1.5510000000000002,1.3 L677.2,151.45 L676.495,153.39999999999998 q-0.6110000000000001,1.3 -1.5510000000000002,1.3 H672.5 Z" fill="#bde05c"/>
<path d="M736.8,141.0 H742.8 V147.5 H736.8 L738.9,144.25 Z" fill="#bde05c"/>
<rect x="739.5" y="142.95" width="1" height="2.6" fill="#3a5a30"/>
<path d="M736.8,155.0 H742.8 V161.5 H736.8 L738.9,158.25 Z" fill="#bde05c"/>
<rect x="739.5" y="156.95" width="1" height="2.6" fill="#3a5a30"/>
<rect x="743.0" y="140.0" width="21.8" height="22" rx="1.6" fill="#6a4b9b"/>
<circle cx="749.8" cy="147.4" r="4.9" fill="none" stroke="#fff" stroke-width="1.6"/>
<path d="M754.0,153.2 L761.6,159.4" stroke="#fff" stroke-width="2.6" stroke-linecap="round"/>
<path d="M761.3,143.6 L749.0,159.6" stroke="#fff" stroke-width="1.5" stroke-linecap="round"/>
<circle cx="761.2" cy="143.8" r="1.1" fill="#fff"/>
<path d="M766.8,148.0 h2.4440000000000004 q0.9400000000000001,0 1.5510000000000002,1.3 L771.5,151.25 L770.795,153.2 q-0.6110000000000001,1.3 -1.5510000000000002,1.3 H766.8 Z" fill="#bde05c"/>
<path d="M801.2,148.2 H805.9000000000001 V154.7 H801.2 L802.845,151.45 Z" fill="#bde05c"/>
<circle cx="818.0" cy="151.0" r="11.2" fill="#1d5b9c"/>
<circle cx="810.6" cy="151.0" r="1.8" fill="#fff"/><circle cx="824.9" cy="151.0" r="1.8" fill="#fff"/>
<path d="M814.7,150.1 L817.8,152.5 L824.3,146.1" fill="none" stroke="#fff" stroke-width="2"/>
<path d="M831.2,148.2 h2.4440000000000004 q0.9400000000000001,0 1.5510000000000002,1.3 L835.9000000000001,151.45 L835.195,153.39999999999998 q-0.6110000000000001,1.3 -1.5510000000000002,1.3 H831.2 Z" fill="#bde05c"/>
<rect x="880.6" y="133.7" width="34.8" height="35.4" fill="none" stroke="#3a8ae8" stroke-width="1.1" stroke-dasharray="1.6,1.3"/>
<path d="M878.0,146.0 H884.6 V155.7 H878.0 L880.31,150.85 Z" fill="#bde05c"/>
<path d="M888.1,140.0 H894.946 L896.1460000000001,141.2 H906.5 Q908.0,141.2 908.0,142.7 V160.1 Q908.0,161.6 906.5,161.6 H888.1 Q886.6,161.6 886.6,160.1 V141.5 Q886.6,140.0 888.1,140.0 Z" fill="#12998a"/>
<rect x="893.37" y="144.30" width="2.85" height="1.90" fill="#fff"/>
<rect x="898.48" y="144.30" width="2.85" height="1.90" fill="#fff"/>
<path d="M892.98,146.90 L898.48,146.90 L898.48,152.50 L895.34,152.50 L895.34,156.20 L890.62,156.20 Z" fill="#fff"/>
<path d="M896.22,146.90 L901.72,146.90 L904.56,156.20 L899.46,156.20 L899.46,152.50 L896.22,152.50 Z" fill="#fff"/>
<rect x="890.62" y="156.80" width="4.71" height="2.00" fill="#fff"/>
<rect x="899.46" y="156.80" width="5.10" height="2.00" fill="#fff"/>
<rect x="897.10" y="147.20" width="0.49" height="5.00" fill="#12998a" opacity="0.6"/>
<path d="M880.2,241.6 H884.7 V247.79999999999998 H880.2 L881.7750000000001,244.7 Z" fill="#bde05c"/>
<path d="M886.3,233.9 H908.0999999999999 V255.70000000000002 H886.3 L890.0,244.70000000000002 Z" fill="#e25d3e"/>
<path d="M890.60,235.90 L904.70,235.90 L904.70,239.80 L903.80,239.80 L902.90,238.20 L894.70,238.20 L900.50,244.50 L893.90,251.10 L901.70,251.10 L904.30,249.20 L905.30,249.20 L905.30,253.70 L890.60,253.70 L890.60,252.50 L898.20,244.60 L890.60,237.20 Z" fill="#fff"/>
<path d="M910.1,241.6 h2.496 q0.96,0 1.584,1.2400000000000002 L914.9,244.7 L914.1800000000001,246.56 q-0.624,1.2400000000000002 -1.584,1.2400000000000002 H910.1 Z" fill="#bde05c"/>
<path d="M959.1,241.6 H963.9 V247.79999999999998 H959.1 L960.78,244.7 Z" fill="#bde05c"/>
<path d="M967.4,234.3 H974.09 L975.2900000000001,235.5 H985.4 Q986.9,235.5 986.9,237.0 V253.60000000000002 Q986.9,255.10000000000002 985.4,255.10000000000002 H967.4 Q965.9,255.10000000000002 965.9,253.60000000000002 V235.8 Q965.9,234.3 967.4,234.3 Z" fill="#12998a"/>
<rect x="972.55" y="238.44" width="2.79" height="1.83" fill="#fff"/>
<rect x="977.56" y="238.44" width="2.79" height="1.83" fill="#fff"/>
<path d="M972.16,240.94 L977.56,240.94 L977.56,246.34 L974.47,246.34 L974.47,249.90 L969.85,249.90 Z" fill="#fff"/>
<path d="M975.34,240.94 L980.73,240.94 L983.53,249.90 L978.52,249.90 L978.52,246.34 L975.34,246.34 Z" fill="#fff"/>
<rect x="969.85" y="250.48" width="4.62" height="1.93" fill="#fff"/>
<rect x="978.52" y="250.48" width="5.01" height="1.93" fill="#fff"/>
<rect x="976.21" y="241.23" width="0.48" height="4.81" fill="#12998a" opacity="0.6"/>
<path d="M182.5,219.9 H187.2 V226.4 H182.5 L184.145,223.15 Z" fill="#bde05c"/>
<circle cx="199.1" cy="223.1" r="11.2" fill="#1d5b9c"/>
<circle cx="191.7" cy="223.1" r="1.8" fill="#fff"/><circle cx="206.0" cy="223.1" r="1.8" fill="#fff"/>
<path d="M195.79999999999998,222.2 L198.9,224.6 L205.4,218.2" fill="none" stroke="#fff" stroke-width="2"/>
<path d="M211.7,219.9 h2.4440000000000004 q0.9400000000000001,0 1.5510000000000002,1.3 L216.39999999999998,223.15 L215.695,225.1 q-0.6110000000000001,1.3 -1.5510000000000002,1.3 H211.7 Z" fill="#bde05c"/>
<path d="M182.5,284.5 H187.2 V291.0 H182.5 L184.145,287.75 Z" fill="#bde05c"/>
<circle cx="199.1" cy="287.7" r="11.2" fill="#1d5b9c"/>
<circle cx="191.7" cy="287.7" r="1.8" fill="#fff"/><circle cx="206.0" cy="287.7" r="1.8" fill="#fff"/>
<path d="M195.79999999999998,286.8 L198.9,289.2 L205.4,282.8" fill="none" stroke="#fff" stroke-width="2"/>
<path d="M211.7,284.5 h2.4440000000000004 q0.9400000000000001,0 1.5510000000000002,1.3 L216.39999999999998,287.75 L215.695,289.7 q-0.6110000000000001,1.3 -1.5510000000000002,1.3 H211.7 Z" fill="#bde05c"/>
<rect x="0" y="354" width="998" height="10.5" fill="#c9c9c9" />
<rect x="0" y="354" width="11" height="10.5" fill="#f0f0f0" />
<path d="M6,357.2 L2.8,359.5 L6,361.8" fill="none" stroke="#333" stroke-width="1.3"/>
<rect x="0" y="364.5" width="998" height="1.5" fill="#f6f6f6" />
<rect x="0" y="366" width="998" height="1.3" fill="#a9bbe2" />
<rect x="0" y="367.3" width="998" height="1.2" fill="#dfe2ea" />
<rect x="0" y="368.5" width="998" height="21.7" fill="#ebeef9" />
<text x="4.40" y="383.00" font-size="8.6" font-weight="normal" fill="#6c6c7c" text-anchor="start" textLength="99.80" lengthAdjust="spacingAndGlyphs">Results - Browse (64) - Input</text>
<rect x="0" y="390.2" width="998" height="1.8" fill="#d3d4da" />
<rect x="0" y="392" width="998" height="32.5" fill="#f6f8fe" />
<rect x="0" y="392" width="998" height="1.5" fill="#e8ecf6" />
<rect x="0" y="392" width="1.5" height="209" fill="#eef1fa" />
<rect x="1.5" y="393.5" width="20.5" height="207.5" fill="#dce2f0" />
<g fill="#8a8c9c"><rect x="4.0" y="396.1" width="1.1" height="1.1"/><rect x="7.1" y="396.1" width="1.1" height="1.1"/><rect x="10.2" y="396.1" width="1.1" height="1.1"/><rect x="13.3" y="396.1" width="1.1" height="1.1"/><rect x="16.4" y="396.1" width="1.1" height="1.1"/></g>
<rect x="6.3" y="404.9" width="10.4" height="2.6" rx="0.9" fill="#c9d0e0" stroke="#4a5472" stroke-width="1.1"/>
<rect x="6.3" y="409.5" width="10.4" height="2.6" rx="0.9" fill="#c9d0e0" stroke="#4a5472" stroke-width="1.1"/>
<rect x="6.3" y="414.09999999999997" width="10.4" height="2.6" rx="0.9" fill="#c9d0e0" stroke="#4a5472" stroke-width="1.1"/>
<rect x="1.9" y="420.6" width="19.4" height="19.7" rx="1.6" fill="#dfe4f0" stroke="#4a8fe0" stroke-width="1.4"/>
<path d="M3.8,431 Q4.5,427 7.5,425.3 Q9.2,424.6 10.3,425.5 L11.2,427.5 H12.8 L13.7,425.5 Q14.8,424.6 16.5,425.3 Q19.5,427 20.2,431 Z" fill="#5a6480"/>
<circle cx="7.2" cy="431.4" r="3.0" fill="#dfe4f0" stroke="#5a6480" stroke-width="1.7"/><circle cx="16.6" cy="431.4" r="3.0" fill="#dfe4f0" stroke="#5a6480" stroke-width="1.7"/>
<rect x="10.6" y="428.8" width="2.8" height="2.2" fill="#5a6480"/>
<text x="31.70" y="412.00" font-size="9.0" font-weight="normal" fill="#303038" text-anchor="start" textLength="44.20" lengthAdjust="spacingAndGlyphs">5 of 5 Fields</text>
<path d="M83.2,407.7 H87.1 L85.15,409.9 Z" fill="#111"/>
<path d="M96,408.5 L99.6,411.9 L105.6,405.9" fill="none" stroke="#949494" stroke-width="2.5"/>
<rect x="115.3" y="401" width="1" height="15" fill="#d0d0d8" />
<text x="124.60" y="412.00" font-size="9.0" font-weight="normal" fill="#303038" text-anchor="start" textLength="41.00" lengthAdjust="spacingAndGlyphs">Cell Viewer</text>
<path d="M172.9,407.7 H176.8 L174.85,409.9 Z" fill="#111"/>
<text x="184.90" y="412.00" font-size="9.0" font-weight="normal" fill="#303038" text-anchor="start" textLength="127.30" lengthAdjust="spacingAndGlyphs">261 records displayed, 3,602 bytes</text>
<rect x="321.6" y="401" width="1" height="15" fill="#d0d0d8" />
<path d="M334.3,414 V403.8 M329,409 L334.3,403.8 L339.6,409" fill="none" stroke="#b4b4b8" stroke-width="1.3"/>
<path d="M354.8,403 V413.2 M349.5,408 L354.8,413.2 L360.1,408" fill="none" stroke="#b4b4b8" stroke-width="1.3"/>
<rect x="369.2" y="401" width="1" height="15" fill="#d0d0d8" />
<rect x="844.5" y="399.8" width="160" height="15.8" rx="2" fill="#fff" stroke="#c4cbe0" stroke-width="1"/>
<circle cx="851.3" cy="407.2" r="3" fill="none" stroke="#b8c0d8" stroke-width="0.9"/><path d="M853.5,409.5 L855.2,411.4" stroke="#b8c0d8" stroke-width="0.9"/>
<text x="860.30" y="409.80" font-size="8.6" font-weight="normal" fill="#9a9aa4" text-anchor="start" textLength="28.50" lengthAdjust="spacingAndGlyphs">Search</text>
<rect x="22" y="424.5" width="976" height="176.5" fill="#ffffff" />
<rect x="22.3" y="424.8" width="493.2" height="12.4" fill="#e6eaf5" />
<rect x="22.3" y="437" width="50.3" height="153" fill="#e9edf8" />
<rect x="73.5" y="435.4" width="77" height="1.5" fill="#8ce66e" />
<rect x="151.8" y="435.4" width="67.8" height="1.5" fill="#8ce66e" />
<rect x="221" y="435.4" width="102" height="1.5" fill="#f5c93a" />
<rect x="323" y="435.4" width="3" height="1.5" fill="#8ce66e" />
<rect x="327.5" y="435.4" width="102.0" height="1.5" fill="#f5c93a" />
<rect x="429.5" y="435.4" width="3" height="1.5" fill="#8ce66e" />
<rect x="434" y="435.4" width="78" height="1.5" fill="#f5c93a" />
<rect x="512" y="435.4" width="3" height="1.5" fill="#8ce66e" />
<rect x="22.3" y="449.8" width="493.2" height="1.2" fill="#dde2f1" />
<rect x="22.3" y="462.8" width="493.2" height="1.2" fill="#dde2f1" />
<rect x="22.3" y="475.8" width="493.2" height="1.2" fill="#dde2f1" />
<rect x="22.3" y="488.8" width="493.2" height="1.2" fill="#dde2f1" />
<rect x="22.3" y="501.8" width="493.2" height="1.2" fill="#dde2f1" />
<rect x="22.3" y="514.8" width="493.2" height="1.2" fill="#dde2f1" />
<rect x="22.3" y="527.8" width="493.2" height="1.2" fill="#dde2f1" />
<rect x="22.3" y="540.8" width="493.2" height="1.2" fill="#dde2f1" />
<rect x="22.3" y="553.8" width="493.2" height="1.2" fill="#dde2f1" />
<rect x="22.3" y="566.8" width="493.2" height="1.2" fill="#dde2f1" />
<rect x="22.3" y="579.8" width="493.2" height="1.2" fill="#dde2f1" />
<rect x="22.3" y="592.8" width="493.2" height="1.2" fill="#dde2f1" />
<rect x="72.2" y="424.8" width="1.2" height="165.2" fill="#dde2f1" />
<rect x="150.5" y="424.8" width="1.2" height="165.2" fill="#dde2f1" />
<rect x="219.70000000000002" y="424.8" width="1.2" height="165.2" fill="#dde2f1" />
<rect x="326.2" y="424.8" width="1.2" height="165.2" fill="#dde2f1" />
<rect x="432.59999999999997" y="424.8" width="1.2" height="165.2" fill="#dde2f1" />
<rect x="514.9" y="424.8" width="1.2" height="165.2" fill="#dde2f1" />
<rect x="22.3" y="436.8" width="493.2" height="0.4" fill="#dde2f1" />
<text x="25.40" y="434.00" font-size="8.4" font-weight="bold" fill="#202030" text-anchor="start" textLength="24.90" lengthAdjust="spacingAndGlyphs">Record</text>
<text x="75.70" y="434.00" font-size="8.4" font-weight="bold" fill="#202030" text-anchor="start" textLength="49.90" lengthAdjust="spacingAndGlyphs">Business_Day</text>
<text x="154.20" y="434.00" font-size="8.4" font-weight="bold" fill="#202030" text-anchor="start" textLength="15.00" lengthAdjust="spacingAndGlyphs">Day</text>
<text x="223.00" y="434.00" font-size="8.4" font-weight="bold" fill="#202030" text-anchor="start" textLength="15.70" lengthAdjust="spacingAndGlyphs">Elf 1</text>
<text x="329.40" y="434.00" font-size="8.4" font-weight="bold" fill="#202030" text-anchor="start" textLength="15.70" lengthAdjust="spacingAndGlyphs">Elf 2</text>
<text x="436.20" y="434.00" font-size="8.4" font-weight="bold" fill="#202030" text-anchor="start" textLength="15.70" lengthAdjust="spacingAndGlyphs">Elf 3</text>
<text x="69.20" y="447.60" font-size="8.5" font-weight="normal" fill="#303040" text-anchor="end" textLength="4.35" lengthAdjust="spacingAndGlyphs">1</text>
<text x="75.70" y="447.60" font-size="8.5" font-weight="normal" fill="#303040" text-anchor="start" textLength="40.00" lengthAdjust="spacingAndGlyphs">2021-01-01</text>
<text x="154.20" y="447.60" font-size="8.5" font-weight="normal" fill="#303040" text-anchor="start" textLength="21.73" lengthAdjust="spacingAndGlyphs">Friday</text>
<text x="223.00" y="447.60" font-size="8.5" font-weight="normal" fill="#303040" text-anchor="start" textLength="56.10" lengthAdjust="spacingAndGlyphs">New Year’s Day</text>
<text x="329.40" y="447.60" font-size="8.5" font-weight="normal" fill="#303040" text-anchor="start" textLength="56.10" lengthAdjust="spacingAndGlyphs">New Year’s Day</text>
<text x="436.20" y="447.60" font-size="8.5" font-weight="normal" fill="#303040" text-anchor="start" textLength="56.10" lengthAdjust="spacingAndGlyphs">New Year’s Day</text>
<text x="69.20" y="460.60" font-size="8.5" font-weight="normal" fill="#303040" text-anchor="end" textLength="4.35" lengthAdjust="spacingAndGlyphs">2</text>
<text x="75.70" y="460.60" font-size="8.5" font-weight="normal" fill="#303040" text-anchor="start" textLength="40.00" lengthAdjust="spacingAndGlyphs">2021-01-04</text>
<text x="154.20" y="460.60" font-size="8.5" font-weight="normal" fill="#303040" text-anchor="start" textLength="27.82" lengthAdjust="spacingAndGlyphs">Monday</text>
<text x="223.00" y="460.60" font-size="8.5" font-weight="normal" fill="#a8a8c0" text-anchor="start" textLength="17.82" lengthAdjust="spacingAndGlyphs">[Null]</text>
<text x="329.40" y="460.60" font-size="8.5" font-weight="normal" fill="#a8a8c0" text-anchor="start" textLength="17.82" lengthAdjust="spacingAndGlyphs">[Null]</text>
<text x="436.20" y="460.60" font-size="8.5" font-weight="normal" fill="#a8a8c0" text-anchor="start" textLength="17.82" lengthAdjust="spacingAndGlyphs">[Null]</text>
<text x="69.20" y="473.60" font-size="8.5" font-weight="normal" fill="#303040" text-anchor="end" textLength="4.35" lengthAdjust="spacingAndGlyphs">3</text>
<text x="75.70" y="473.60" font-size="8.5" font-weight="normal" fill="#303040" text-anchor="start" textLength="40.00" lengthAdjust="spacingAndGlyphs">2021-01-05</text>
<text x="154.20" y="473.60" font-size="8.5" font-weight="normal" fill="#303040" text-anchor="start" textLength="29.70" lengthAdjust="spacingAndGlyphs">Tuesday</text>
<text x="223.00" y="473.60" font-size="8.5" font-weight="normal" fill="#a8a8c0" text-anchor="start" textLength="17.82" lengthAdjust="spacingAndGlyphs">[Null]</text>
<text x="329.40" y="473.60" font-size="8.5" font-weight="normal" fill="#a8a8c0" text-anchor="start" textLength="17.82" lengthAdjust="spacingAndGlyphs">[Null]</text>
<text x="436.20" y="473.60" font-size="8.5" font-weight="normal" fill="#a8a8c0" text-anchor="start" textLength="17.82" lengthAdjust="spacingAndGlyphs">[Null]</text>
<text x="69.20" y="486.60" font-size="8.5" font-weight="normal" fill="#303040" text-anchor="end" textLength="4.35" lengthAdjust="spacingAndGlyphs">4</text>
<text x="75.70" y="486.60" font-size="8.5" font-weight="normal" fill="#303040" text-anchor="start" textLength="40.00" lengthAdjust="spacingAndGlyphs">2021-01-06</text>
<text x="154.20" y="486.60" font-size="8.5" font-weight="normal" fill="#303040" text-anchor="start" textLength="41.15" lengthAdjust="spacingAndGlyphs">Wednesday</text>
<text x="223.00" y="486.60" font-size="8.5" font-weight="normal" fill="#a8a8c0" text-anchor="start" textLength="17.82" lengthAdjust="spacingAndGlyphs">[Null]</text>
<text x="329.40" y="486.60" font-size="8.5" font-weight="normal" fill="#a8a8c0" text-anchor="start" textLength="17.82" lengthAdjust="spacingAndGlyphs">[Null]</text>
<text x="436.20" y="486.60" font-size="8.5" font-weight="normal" fill="#a8a8c0" text-anchor="start" textLength="17.82" lengthAdjust="spacingAndGlyphs">[Null]</text>
<text x="69.20" y="499.60" font-size="8.5" font-weight="normal" fill="#303040" text-anchor="end" textLength="4.35" lengthAdjust="spacingAndGlyphs">5</text>
<text x="75.70" y="499.60" font-size="8.5" font-weight="normal" fill="#303040" text-anchor="start" textLength="40.00" lengthAdjust="spacingAndGlyphs">2021-01-07</text>
<text x="154.20" y="499.60" font-size="8.5" font-weight="normal" fill="#303040" text-anchor="start" textLength="32.60" lengthAdjust="spacingAndGlyphs">Thursday</text>
<text x="223.00" y="499.60" font-size="8.5" font-weight="normal" fill="#a8a8c0" text-anchor="start" textLength="17.82" lengthAdjust="spacingAndGlyphs">[Null]</text>
<text x="329.40" y="499.60" font-size="8.5" font-weight="normal" fill="#a8a8c0" text-anchor="start" textLength="17.82" lengthAdjust="spacingAndGlyphs">[Null]</text>
<text x="436.20" y="499.60" font-size="8.5" font-weight="normal" fill="#a8a8c0" text-anchor="start" textLength="17.82" lengthAdjust="spacingAndGlyphs">[Null]</text>
<text x="69.20" y="512.60" font-size="8.5" font-weight="normal" fill="#303040" text-anchor="end" textLength="4.35" lengthAdjust="spacingAndGlyphs">6</text>
<text x="75.70" y="512.60" font-size="8.5" font-weight="normal" fill="#303040" text-anchor="start" textLength="40.00" lengthAdjust="spacingAndGlyphs">2021-01-08</text>
<text x="154.20" y="512.60" font-size="8.5" font-weight="normal" fill="#303040" text-anchor="start" textLength="21.73" lengthAdjust="spacingAndGlyphs">Friday</text>
<text x="223.00" y="512.60" font-size="8.5" font-weight="normal" fill="#a8a8c0" text-anchor="start" textLength="17.82" lengthAdjust="spacingAndGlyphs">[Null]</text>
<text x="329.40" y="512.60" font-size="8.5" font-weight="normal" fill="#a8a8c0" text-anchor="start" textLength="17.82" lengthAdjust="spacingAndGlyphs">[Null]</text>
<text x="436.20" y="512.60" font-size="8.5" font-weight="normal" fill="#a8a8c0" text-anchor="start" textLength="17.82" lengthAdjust="spacingAndGlyphs">[Null]</text>
<text x="69.20" y="525.60" font-size="8.5" font-weight="normal" fill="#303040" text-anchor="end" textLength="4.35" lengthAdjust="spacingAndGlyphs">7</text>
<text x="75.70" y="525.60" font-size="8.5" font-weight="normal" fill="#303040" text-anchor="start" textLength="39.42" lengthAdjust="spacingAndGlyphs">2021-01-11</text>
<text x="154.20" y="525.60" font-size="8.5" font-weight="normal" fill="#303040" text-anchor="start" textLength="27.82" lengthAdjust="spacingAndGlyphs">Monday</text>
<text x="223.00" y="525.60" font-size="8.5" font-weight="normal" fill="#a8a8c0" text-anchor="start" textLength="17.82" lengthAdjust="spacingAndGlyphs">[Null]</text>
<text x="329.40" y="525.60" font-size="8.5" font-weight="normal" fill="#a8a8c0" text-anchor="start" textLength="17.82" lengthAdjust="spacingAndGlyphs">[Null]</text>
<text x="436.20" y="525.60" font-size="8.5" font-weight="normal" fill="#a8a8c0" text-anchor="start" textLength="17.82" lengthAdjust="spacingAndGlyphs">[Null]</text>
<text x="69.20" y="538.60" font-size="8.5" font-weight="normal" fill="#303040" text-anchor="end" textLength="4.35" lengthAdjust="spacingAndGlyphs">8</text>
<text x="75.70" y="538.60" font-size="8.5" font-weight="normal" fill="#303040" text-anchor="start" textLength="40.00" lengthAdjust="spacingAndGlyphs">2021-01-12</text>
<text x="154.20" y="538.60" font-size="8.5" font-weight="normal" fill="#303040" text-anchor="start" textLength="29.70" lengthAdjust="spacingAndGlyphs">Tuesday</text>
<text x="223.00" y="538.60" font-size="8.5" font-weight="normal" fill="#a8a8c0" text-anchor="start" textLength="17.82" lengthAdjust="spacingAndGlyphs">[Null]</text>
<text x="329.40" y="538.60" font-size="8.5" font-weight="normal" fill="#a8a8c0" text-anchor="start" textLength="17.82" lengthAdjust="spacingAndGlyphs">[Null]</text>
<text x="436.20" y="538.60" font-size="8.5" font-weight="normal" fill="#a8a8c0" text-anchor="start" textLength="17.82" lengthAdjust="spacingAndGlyphs">[Null]</text>
<text x="69.20" y="551.60" font-size="8.5" font-weight="normal" fill="#303040" text-anchor="end" textLength="4.35" lengthAdjust="spacingAndGlyphs">9</text>
<text x="75.70" y="551.60" font-size="8.5" font-weight="normal" fill="#303040" text-anchor="start" textLength="40.00" lengthAdjust="spacingAndGlyphs">2021-01-13</text>
<text x="154.20" y="551.60" font-size="8.5" font-weight="normal" fill="#303040" text-anchor="start" textLength="41.15" lengthAdjust="spacingAndGlyphs">Wednesday</text>
<text x="223.00" y="551.60" font-size="8.5" font-weight="normal" fill="#a8a8c0" text-anchor="start" textLength="17.82" lengthAdjust="spacingAndGlyphs">[Null]</text>
<text x="329.40" y="551.60" font-size="8.5" font-weight="normal" fill="#a8a8c0" text-anchor="start" textLength="17.82" lengthAdjust="spacingAndGlyphs">[Null]</text>
<text x="436.20" y="551.60" font-size="8.5" font-weight="normal" fill="#a8a8c0" text-anchor="start" textLength="17.82" lengthAdjust="spacingAndGlyphs">[Null]</text>
<text x="69.20" y="564.60" font-size="8.5" font-weight="normal" fill="#303040" text-anchor="end" textLength="8.70" lengthAdjust="spacingAndGlyphs">10</text>
<text x="75.70" y="564.60" font-size="8.5" font-weight="normal" fill="#303040" text-anchor="start" textLength="40.00" lengthAdjust="spacingAndGlyphs">2021-01-14</text>
<text x="154.20" y="564.60" font-size="8.5" font-weight="normal" fill="#303040" text-anchor="start" textLength="32.60" lengthAdjust="spacingAndGlyphs">Thursday</text>
<text x="223.00" y="564.60" font-size="8.5" font-weight="normal" fill="#a8a8c0" text-anchor="start" textLength="17.82" lengthAdjust="spacingAndGlyphs">[Null]</text>
<text x="329.40" y="564.60" font-size="8.5" font-weight="normal" fill="#a8a8c0" text-anchor="start" textLength="17.82" lengthAdjust="spacingAndGlyphs">[Null]</text>
<text x="436.20" y="564.60" font-size="8.5" font-weight="normal" fill="#a8a8c0" text-anchor="start" textLength="17.82" lengthAdjust="spacingAndGlyphs">[Null]</text>
<text x="69.20" y="577.60" font-size="8.5" font-weight="normal" fill="#303040" text-anchor="end" textLength="8.12" lengthAdjust="spacingAndGlyphs">11</text>
<text x="75.70" y="577.60" font-size="8.5" font-weight="normal" fill="#303040" text-anchor="start" textLength="40.00" lengthAdjust="spacingAndGlyphs">2021-01-15</text>
<text x="154.20" y="577.60" font-size="8.5" font-weight="normal" fill="#303040" text-anchor="start" textLength="21.73" lengthAdjust="spacingAndGlyphs">Friday</text>
<text x="223.00" y="577.60" font-size="8.5" font-weight="normal" fill="#a8a8c0" text-anchor="start" textLength="17.82" lengthAdjust="spacingAndGlyphs">[Null]</text>
<text x="329.40" y="577.60" font-size="8.5" font-weight="normal" fill="#a8a8c0" text-anchor="start" textLength="17.82" lengthAdjust="spacingAndGlyphs">[Null]</text>
<text x="436.20" y="577.60" font-size="8.5" font-weight="normal" fill="#a8a8c0" text-anchor="start" textLength="17.82" lengthAdjust="spacingAndGlyphs">[Null]</text>
<text x="69.20" y="590.60" font-size="8.5" font-weight="normal" fill="#303040" text-anchor="end" textLength="8.70" lengthAdjust="spacingAndGlyphs">12</text>
<text x="75.70" y="590.60" font-size="8.5" font-weight="normal" fill="#303040" text-anchor="start" textLength="40.00" lengthAdjust="spacingAndGlyphs">2021-01-18</text>
<text x="154.20" y="590.60" font-size="8.5" font-weight="normal" fill="#303040" text-anchor="start" textLength="27.82" lengthAdjust="spacingAndGlyphs">Monday</text>
<text x="223.00" y="590.60" font-size="8.5" font-weight="normal" fill="#303040" text-anchor="start" textLength="77.33" lengthAdjust="spacingAndGlyphs">Martin Luther King, Jr.</text>
<text x="329.40" y="590.60" font-size="8.5" font-weight="normal" fill="#303040" text-anchor="start" textLength="77.33" lengthAdjust="spacingAndGlyphs">Martin Luther King, Jr.</text>
<text x="436.20" y="590.60" font-size="8.5" font-weight="normal" fill="#a8a8c0" text-anchor="start" textLength="17.82" lengthAdjust="spacingAndGlyphs">[Null]</text>
<rect x="22.3" y="590" width="975.7" height="11" fill="#f0f0f0" />
<rect x="22.3" y="589.5" width="493" height="0.6" fill="#ffffff" />
<path d="M29.8,593.6 L26.6,596.3 L29.8,599" fill="none" stroke="#a0a0a0" stroke-width="1.2"/>
</svg>
</body></html>
